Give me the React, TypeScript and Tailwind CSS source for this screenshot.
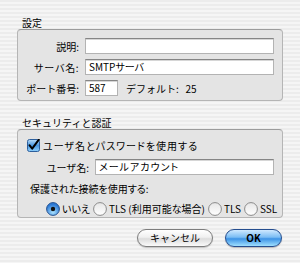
import React, { useState } from 'react';

// Aqua風のチェックボックス
const AquaCheck: React.FC<{ checked: boolean }> = ({ checked }) => (
  <svg width="13" height="13" viewBox="0 0 13 13" className="shrink-0">
    <defs>
      <linearGradient id="cb" x1="0" y1="0" x2="0" y2="1">
        <stop offset="0" stopColor="#b9dcf7" />
        <stop offset="0.5" stopColor="#4a97df" />
        <stop offset="1" stopColor="#8fd0fb" />
      </linearGradient>
    </defs>
    <rect x="0.5" y="0.5" width="12" height="12" rx="2" fill="url(#cb)" stroke="#2d5f9c" />
    {checked && (
      <path d="M2.6 6.4 L5.2 9.6 L11.8 0.6" fill="none" stroke="#000" strokeWidth="2" strokeLinecap="round" strokeLinejoin="round" />
    )}
  </svg>
);

// Aqua風のラジオボタン
const AquaRadio: React.FC<{ checked: boolean }> = ({ checked }) => (
  <svg width="14" height="14" viewBox="0 0 14 14" className="shrink-0">
    <defs>
      <radialGradient id="rbOn" cx="0.5" cy="0.75" r="0.6">
        <stop offset="0" stopColor="#a9e2ff" />
        <stop offset="1" stopColor="#2c7ad6" />
      </radialGradient>
      <linearGradient id="rbOff" x1="0" y1="0" x2="0" y2="1">
        <stop offset="0" stopColor="#e6e6e6" />
        <stop offset="1" stopColor="#ffffff" />
      </linearGradient>
    </defs>
    <circle cx="7" cy="7" r="6.4" fill={checked ? 'url(#rbOn)' : 'url(#rbOff)'} stroke={checked ? '#25518f' : '#8a8a8a'} strokeWidth="1" />
    {checked && <circle cx="7" cy="7" r="2.2" fill="#111" />}
  </svg>
);

const Field: React.FC<{ value: string; className?: string }> = ({ value, className = '' }) => (
  <div className={`h-4 bg-white border border-[#b3b3b3] border-t-[#858585] shadow-[inset_0_1px_0_#d6d6d6] px-[3px] flex items-center text-[10px] leading-none ${className}`}>
    {value}
  </div>
);

const App: React.FC = () => {
  const [useAuth] = useState(true);
  const [secure] = useState('none');

  const radios = [
    { id: 'none', label: 'いいえ' },
    { id: 'tlsAuto', label: 'TLS (利用可能な場合)' },
    { id: 'tls', label: 'TLS' },
    { id: 'ssl', label: 'SSL' },
  ];

  return (
    <div className="w-[300px] h-[263px] overflow-hidden px-[17px] pt-[17px] text-[10px] text-black font-['Noto_Sans_CJK_JP','Noto_Sans',sans-serif] bg-[repeating-linear-gradient(180deg,#ececec_0px,#ececec_2px,#f5f5f5_2px,#f5f5f5_4px)]">
      {/* 設定 */}
      <div className="pl-[5px] h-3 leading-3">設定</div>
      <div className="h-[72px] rounded-[4px] border border-[#b5b5b5] border-t-[#9c9c9c] bg-[#e4e4e4] pt-2 pr-2 flex flex-col gap-[5px]">
        <div className="flex items-center">
          <span className="w-[61px] text-right">説明:</span>
          <Field value="" className="ml-[6px] flex-1" />
        </div>
        <div className="flex items-center">
          <span className="w-[61px] text-right tracking-[0.5px]">サーバ名:</span>
          <Field value="SMTPサーバ" className="ml-[6px] flex-1 [font-feature-settings:'palt']" />
        </div>
        <div className="flex items-center">
          <span className="w-[61px] text-right">ポート番号:</span>
          <Field value="587" className="ml-[6px] w-[33px]" />
          <span className="ml-[8px]">デフォルト:&nbsp;&nbsp;&nbsp;25</span>
        </div>
      </div>

      {/* セキュリティと認証 */}
      <div className="pl-[5px] mt-[16px] h-3 leading-3">セキュリティと認証</div>
      <div className="h-[89px] rounded-[4px] border border-[#b5b5b5] border-t-[#9c9c9c] bg-[#e4e4e4] pt-[8px] pr-2 flex flex-col">
        <div className="flex items-center pl-[9px] gap-[3px] h-[14px]">
          <AquaCheck checked={useAuth} />
          <span className="[font-feature-settings:'palt'] tracking-[1px]">ユーザ名とパスワードを使用する</span>
        </div>
        <div className="flex items-center mt-[7px]">
          <span className="w-[71px] text-right">ユーザ名:</span>
          <Field value="メールアカウント" className="ml-[6px] flex-1 [font-feature-settings:'palt'] tracking-[1px]" />
        </div>
        <div className="pl-[12px] mt-[8px] h-3 leading-3 [font-feature-settings:'palt']">保護された接続を使用する:</div>
        <div className="flex items-center pl-[28px] mt-[6px] [font-feature-settings:'palt']">
          {radios.map((r, i) => (
            <div key={r.id} className={`flex items-center gap-[2px] ${i > 0 ? 'ml-[3px]' : ''}`}>
              <AquaRadio checked={secure === r.id} />
              <span className="whitespace-nowrap">{r.label}</span>
            </div>
          ))}
        </div>
      </div>

      {/* ボタン */}
      <div className="flex justify-end gap-[12px] mt-[11px] pr-[1px]">
        <button className="w-[76px] h-[18px] rounded-full border border-[#7d7d7d] bg-[linear-gradient(180deg,#ffffff_0%,#f0f0f0_45%,#dcdcdc_55%,#fafafa_100%)] shadow-[0_1px_1px_rgba(0,0,0,0.2)] text-[10px] leading-none">
          キャンセル
        </button>
        <button className="w-[57px] h-[18px] rounded-full border border-[#254d8e] bg-[linear-gradient(180deg,#cfe9ff_0%,#7bbdf4_45%,#3d93e6_55%,#9fe0ff_100%)] shadow-[0_1px_1px_rgba(0,0,0,0.25)] text-[10px] font-bold leading-none">
          OK
        </button>
      </div>
    </div>
  );
};

export default App;
